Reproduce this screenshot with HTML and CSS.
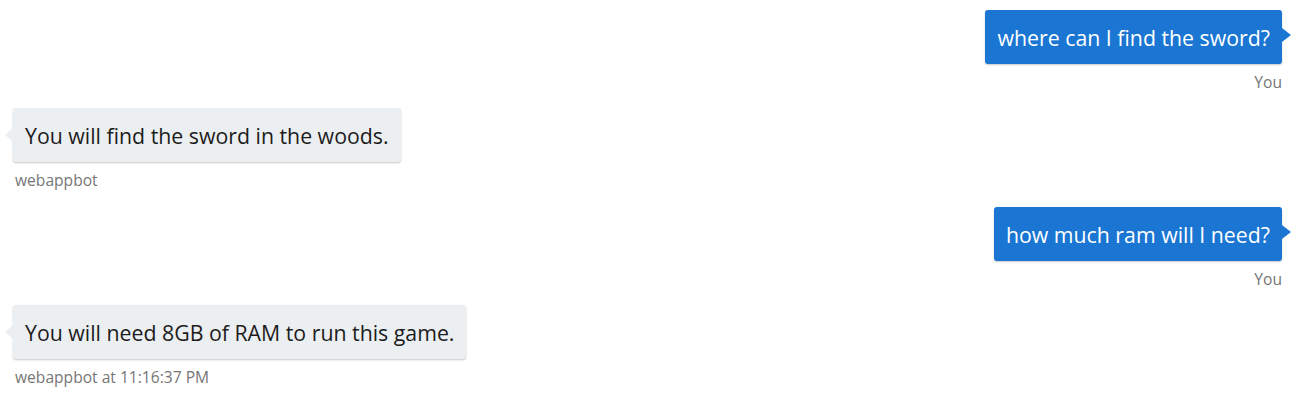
FILE: index.html
```html
<!DOCTYPE html>
<html lang="en">
<head>
<meta charset="utf-8">
<title>Chat</title>
<link rel="stylesheet" href="styles.css">
</head>
<body>
<div class="chat">
  <div class="msg user">
    <div class="bubble">where can I find the sword?</div>
    <div class="meta">You</div>
  </div>
  <div class="msg bot">
    <div class="bubble">You will find the sword in the woods.</div>
    <div class="meta">webappbot</div>
  </div>
  <div class="msg user">
    <div class="bubble">how much ram will I need?</div>
    <div class="meta">You</div>
  </div>
  <div class="msg bot">
    <div class="bubble">You will need 8GB of RAM to run this game.</div>
    <div class="meta">webappbot at 11:16:37 PM</div>
  </div>
</div>
</body>
</html>
```

FILE: styles.css
```css
html, body {
  margin: 0;
  padding: 0;
  background: #ffffff;
}

body {
  font-family: "Segoe UI", "Open Sans", "Noto Sans", sans-serif;
}

.chat {
  display: flex;
  flex-direction: column;
  padding: 10px 19px 0 13px;
}

.msg {
  display: flex;
  flex-direction: column;
  margin-bottom: 16px;
}

.msg.user {
  align-items: flex-end;
}

.msg.bot {
  align-items: flex-start;
  margin-bottom: 17px;
}

.bubble {
  position: relative;
  font-size: 21.3px;
  line-height: 28px;
  padding: 14px 12px 12px 12px;
  border-radius: 3px;
  box-shadow: 0 1px 2px rgba(0, 0, 0, 0.22);
}

.user .bubble {
  background: #1a76d2;
  color: #ffffff;
}

.bot .bubble {
  background: #eceff1;
  color: #1c1c1c;
}

.bubble::after {
  content: "";
  position: absolute;
  top: 18px;
  width: 0;
  height: 0;
  border-top: 7px solid transparent;
  border-bottom: 7px solid transparent;
}

.user .bubble::after {
  right: -9px;
  border-left: 9px solid #1a76d2;
}

.bot .bubble::after {
  left: -8px;
  top: 20px;
  border-right: 8px solid #eceff1;
}

.meta {
  margin-top: 8px;
  font-size: 15.6px;
  line-height: 20px;
  color: #767676;
}

.bot .meta {
  padding-left: 2px;
}
```
